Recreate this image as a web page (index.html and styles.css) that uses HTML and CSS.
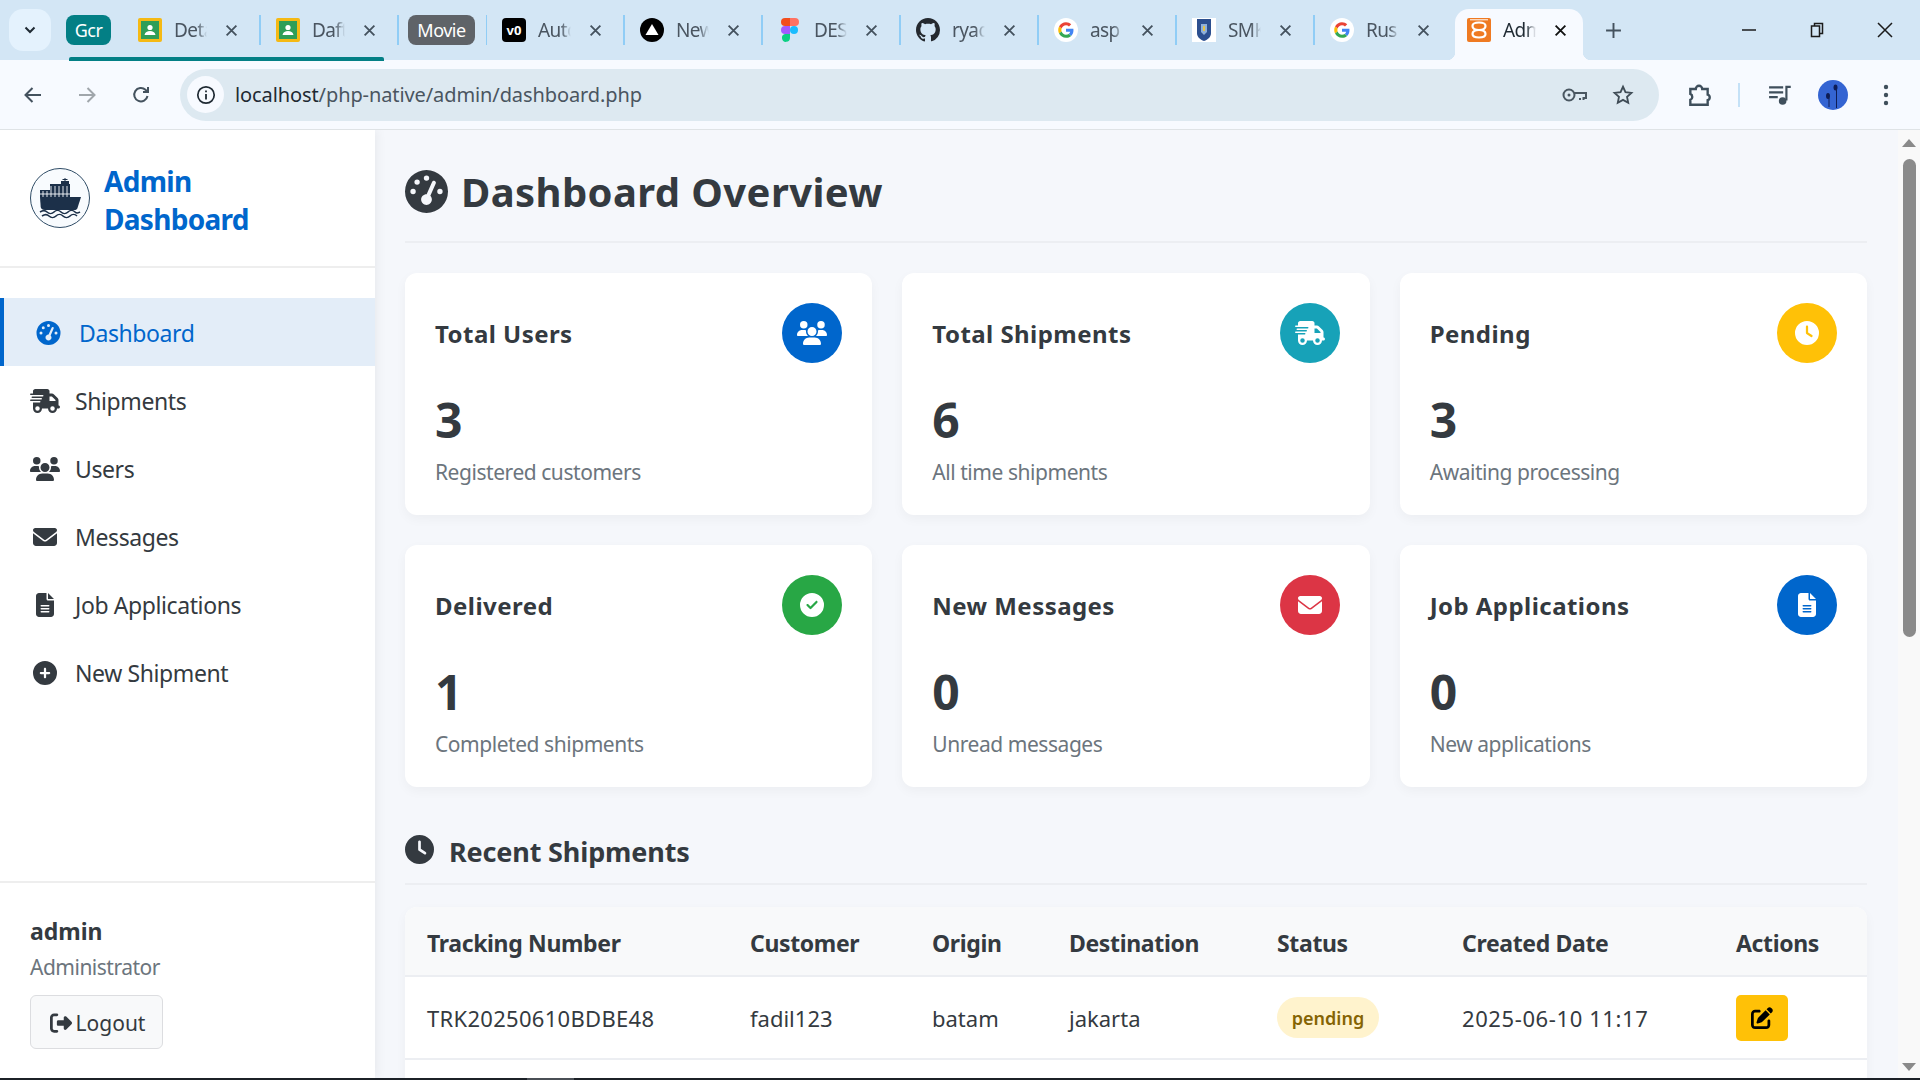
FILE: index.html
```html
<!DOCTYPE html>
<html lang="en">
<head>
  <meta charset="UTF-8">
  <title>Admin Dashboard</title>
  <link rel="stylesheet" href="styles.css">
</head>
<body>
  <svg class="defs" aria-hidden="true">
    <symbol id="i-gauge" viewBox="0 0 512 512"><path d="M0 256a256 256 0 1 1 512 0A256 256 0 1 1 0 256zM288 96a32 32 0 1 0 -64 0 32 32 0 1 0 64 0zM256 416c35.3 0 64-28.7 64-64c0-17.4-6.9-33.1-18.1-44.6L366 161.7c5.3-12.1-.2-26.3-12.3-31.6s-26.3 .2-31.6 12.3L257.9 288c-.6 0-1.3 0-1.9 0c-35.3 0-64 28.7-64 64s28.7 64 64 64zM176 144a32 32 0 1 0 -64 0 32 32 0 1 0 64 0zM96 288a32 32 0 1 0 0-64 32 32 0 1 0 0 64zm352-32a32 32 0 1 0 -64 0 32 32 0 1 0 64 0z"/></symbol>
    <symbol id="i-truck" viewBox="0 0 640 512"><path d="M112 0C85.5 0 64 21.5 64 48V96H16c-8.8 0-16 7.2-16 16s7.2 16 16 16H64 272c8.8 0 16 7.2 16 16s-7.2 16-16 16H64 48c-8.8 0-16 7.2-16 16s7.2 16 16 16H64 240c8.8 0 16 7.2 16 16s-7.2 16-16 16H64 16c-8.8 0-16 7.2-16 16s7.2 16 16 16H64 208c8.8 0 16 7.2 16 16s-7.2 16-16 16H64V416c0 53 43 96 96 96s96-43 96-96H384c0 53 43 96 96 96s96-43 96-96h32c17.7 0 32-14.3 32-32s-14.3-32-32-32V288 256 237.3c0-17-6.7-33.3-18.7-45.3L512 114.7c-12-12-28.3-18.7-45.3-18.7H416V48c0-26.5-21.5-48-48-48H112zM544 237.3V256H416V160h50.7L544 237.3zM160 368a48 48 0 1 1 0 96 48 48 0 1 1 0-96zm272 48a48 48 0 1 1 96 0 48 48 0 1 1 -96 0z"/></symbol>
    <symbol id="i-users" viewBox="0 0 640 512"><path d="M144 0a80 80 0 1 1 0 160A80 80 0 1 1 144 0zM512 0a80 80 0 1 1 0 160A80 80 0 1 1 512 0zM0 298.7C0 239.8 47.8 192 106.7 192h42.7c15.9 0 31 3.5 44.6 9.7c-1.3 7.2-1.9 14.7-1.9 22.3c0 38.2 16.8 72.5 43.3 96c-.2 0-.4 0-.7 0H21.3C9.6 320 0 310.4 0 298.7zM405.3 320c-.2 0-.4 0-.7 0c26.6-23.5 43.3-57.8 43.3-96c0-7.6-.7-15-1.9-22.3c13.6-6.3 28.7-9.7 44.6-9.7h42.7C592.2 192 640 239.8 640 298.7c0 11.8-9.6 21.3-21.3 21.3H405.3zM224 224a96 96 0 1 1 192 0 96 96 0 1 1 -192 0zM128 485.3C128 411.7 187.7 352 261.3 352H378.7C452.3 352 512 411.7 512 485.3c0 14.7-11.9 26.7-26.7 26.7H154.7c-14.7 0-26.7-11.9-26.7-26.7z"/></symbol>
    <symbol id="i-envelope" viewBox="0 0 512 512"><path d="M48 64C21.5 64 0 85.5 0 112c0 15.1 7.1 29.3 19.2 38.4L236.8 313.6c11.4 8.5 27 8.5 38.4 0L492.8 150.4c12.1-9.1 19.2-23.3 19.2-38.4c0-26.5-21.5-48-48-48H48zM0 176V384c0 35.3 28.7 64 64 64H448c35.3 0 64-28.7 64-64V176L294.4 339.2c-22.8 17.1-54 17.1-76.8 0L0 176z"/></symbol>
    <symbol id="i-file" viewBox="0 0 384 512"><path d="M64 0C28.7 0 0 28.7 0 64V448c0 35.3 28.7 64 64 64H320c35.3 0 64-28.7 64-64V160H256c-17.7 0-32-14.3-32-32V0H64zM256 0V128H384L256 0zM112 256H272c8.8 0 16 7.2 16 16s-7.2 16-16 16H112c-8.8 0-16-7.2-16-16s7.2-16 16-16zm0 64H272c8.8 0 16 7.2 16 16s-7.2 16-16 16H112c-8.8 0-16-7.2-16-16s7.2-16 16-16zm0 64H272c8.8 0 16 7.2 16 16s-7.2 16-16 16H112c-8.8 0-16-7.2-16-16s7.2-16 16-16z"/></symbol>
    <symbol id="i-plus" viewBox="0 0 512 512"><path d="M256 512A256 256 0 1 0 256 0a256 256 0 1 0 0 512zM232 344V280H168c-13.3 0-24-10.7-24-24s10.7-24 24-24h64V168c0-13.3 10.7-24 24-24s24 10.7 24 24v64h64c13.3 0 24 10.7 24 24s-10.7 24-24 24H280v64c0 13.3-10.7 24-24 24s-24-10.7-24-24z"/></symbol>
    <symbol id="i-clock" viewBox="0 0 512 512"><path d="M256 0a256 256 0 1 1 0 512A256 256 0 1 1 256 0zM232 120V256c0 8 4 15.5 10.7 20l96 64c11 7.4 25.9 4.4 33.3-6.7s4.4-25.9-6.7-33.3L280 243.2V120c0-13.3-10.7-24-24-24s-24 10.7-24 24z"/></symbol>
    <symbol id="i-check" viewBox="0 0 512 512"><path d="M256 512A256 256 0 1 0 256 0a256 256 0 1 0 0 512zM369 209L241 337c-9.4 9.4-24.6 9.4-33.9 0l-64-64c-9.4-9.4-9.4-24.6 0-33.9s24.6-9.4 33.9 0l47 47L335 175c9.4-9.4 24.6-9.4 33.9 0s9.4 24.6 0 33.9z"/></symbol>
    <symbol id="i-logout" viewBox="0 0 512 512"><path d="M377.9 105.9L500.7 228.7c7.2 7.2 11.3 17.1 11.3 27.3s-4.1 20.1-11.3 27.3L377.9 406.1c-6.4 6.4-15 9.9-24 9.9c-18.7 0-33.9-15.2-33.9-33.9l0-62.1-128 0c-17.7 0-32-14.3-32-32l0-64c0-17.7 14.3-32 32-32l128 0 0-62.1c0-18.7 15.2-33.9 33.9-33.9c9 0 17.6 3.6 24 9.9zM160 96L96 96c-17.7 0-32 14.3-32 32l0 256c0 17.7 14.3 32 32 32l64 0c17.7 0 32 14.3 32 32s-14.3 32-32 32l-64 0c-53 0-96-43-96-96L0 128C0 75 43 32 96 32l64 0c17.7 0 32 14.3 32 32s-14.3 32-32 32z"/></symbol>
    <symbol id="i-edit" viewBox="0 0 512 512"><path d="M471.6 21.7c-21.9-21.9-57.3-21.9-79.2 0L362.3 51.7l97.9 97.9 30.1-30.1c21.9-21.9 21.9-57.3 0-79.2L471.6 21.7zm-299.2 220c-6.1 6.1-10.8 13.6-13.5 21.9l-29.6 88.8c-2.9 8.6-.6 18.1 5.8 24.6s15.9 8.7 24.6 5.8l88.8-29.6c8.2-2.7 15.7-7.4 21.9-13.5L437.7 172.3 339.7 74.3 172.4 241.7zM96 64C43 64 0 107 0 160V416c0 53 43 96 96 96H352c53 0 96-43 96-96V320c0-17.7-14.3-32-32-32s-32 14.3-32 32v96c0 17.7-14.3 32-32 32H96c-17.7 0-32-14.3-32-32V160c0-17.7 14.3-32 32-32h96c17.7 0 32-14.3 32-32s-14.3-32-32-32H96z"/></symbol>
    <symbol id="i-close" viewBox="0 0 12 12"><path d="M1.500 1.500l9 9m0-9l-9 9" fill="none" stroke="currentColor" stroke-width="1.700"/></symbol>
    <symbol id="i-classroom" viewBox="0 0 24 24"><rect width="24" height="24" rx="2" fill="#f5b914"/><rect x="3" y="3" width="18" height="18" fill="#2f9e58"/><circle cx="12" cy="9.500" r="2.600" fill="#fff"/><path d="M6.500 17c.6-3 2.800-4 5.500-4s4.900 1 5.500 4z" fill="#fff"/></symbol>
    <symbol id="i-google" viewBox="0 0 24 24"><circle cx="12" cy="12" r="12" fill="#fff"/><g transform="translate(4.200 4.200) scale(.325)"><path fill="#EA4335" d="M24 9.500c3.540 0 6.710 1.220 9.210 3.600l6.850-6.850C35.900 2.380 30.470 0 24 0 14.620 0 6.510 5.380 2.560 13.220l7.980 6.190C12.430 13.720 17.740 9.500 24 9.500z"/><path fill="#4285F4" d="M46.980 24.550c0-1.570-.15-3.090-.38-4.550H24v9.020h12.940c-.58 2.960-2.260 5.480-4.780 7.180l7.730 6c4.510-4.180 7.090-10.360 7.090-17.650z"/><path fill="#FBBC05" d="M10.530 28.590c-.48-1.450-.76-2.990-.76-4.590s.27-3.140.76-4.590l-7.980-6.190C.92 16.460 0 20.120 0 24c0 3.880.92 7.540 2.560 10.780l7.970-6.190z"/><path fill="#34A853" d="M24 48c6.480 0 11.930-2.130 15.890-5.810l-7.730-6c-2.150 1.450-4.920 2.300-8.160 2.300-6.260 0-11.570-4.220-13.470-9.910l-7.980 6.190C6.510 42.620 14.620 48 24 48z"/></g></symbol>
  </svg>

  <header class="tabstrip">
    <div class="tab-search"><svg class="chevron" viewBox="0 0 12 8"><path d="M1.500 1.500L6 6l4.500-4.500" fill="none" stroke="#1f2a33" stroke-width="2"/></svg></div>
    <div class="group-chip chip-teal">Gcr</div>
    <div class="tab">
      <svg class="favicon"><use href="#i-classroom"/></svg>
      <span class="tab-title">Deta</span>
      <svg class="tab-close"><use href="#i-close"/></svg>
    </div>
    <div class="tab">
      <svg class="favicon"><use href="#i-classroom"/></svg>
      <span class="tab-title">Daft</span>
      <svg class="tab-close"><use href="#i-close"/></svg>
    </div>
    <div class="group-chip chip-gray">Movie</div>
    <div class="tab tab-lead">
      <span class="favicon fav-v0">v0</span>
      <span class="tab-title">Auto</span>
      <svg class="tab-close"><use href="#i-close"/></svg>
    </div>
    <div class="tab">
      <svg class="favicon" viewBox="0 0 24 24"><circle cx="12" cy="12" r="12" fill="#000"/><path d="M12 6l6.500 11h-13z" fill="#fff"/></svg>
      <span class="tab-title">New</span>
      <svg class="tab-close"><use href="#i-close"/></svg>
    </div>
    <div class="tab">
      <svg class="favicon" viewBox="0 0 24 24"><path d="M7 0h5v8H7a4 4 0 0 1 0-8z" fill="#f24e1e"/><path d="M12 0h5a4 4 0 0 1 0 8h-5z" fill="#ff7262"/><path d="M7 8h5v8H7a4 4 0 0 1 0-8z" fill="#a259ff"/><circle cx="16" cy="12" r="4" fill="#1abcfe"/><path d="M7 16h5v4a4 4 0 1 1-5-4z" fill="#0acf83"/></svg>
      <span class="tab-title">DES</span>
      <svg class="tab-close"><use href="#i-close"/></svg>
    </div>
    <div class="tab">
      <svg class="favicon" viewBox="0 0 16 16"><path fill="#24292f" d="M8 0C3.580 0 0 3.580 0 8c0 3.540 2.290 6.530 5.470 7.590.4.070.55-.17.55-.41 0-.19-.01-.82-.01-1.490-2.010.37-2.530-.49-2.690-.94-.09-.23-.48-.94-.82-1.130-.28-.15-.68-.52-.01-.53.63-.01 1.080.58 1.230.82.72 1.210 1.870.87 2.330.66.07-.52.28-.87.51-1.070-1.780-.2-3.640-.89-3.640-3.950 0-.87.31-1.590.82-2.150-.08-.2-.36-1.020.08-2.120 0 0 .67-.21 2.200.82.64-.18 1.320-.27 2-.27.68 0 1.360.09 2 .27 1.530-1.040 2.200-.82 2.200-.82.44 1.100.16 1.920.08 2.120.51.56.82 1.270.82 2.150 0 3.070-1.870 3.750-3.650 3.950.29.25.54.73.54 1.480 0 1.070-.01 1.930-.01 2.200 0 .21.15.46.55.38A8.013 8.013 0 0 0 16 8c0-4.420-3.580-8-8-8z"/></svg>
      <span class="tab-title">ryad</span>
      <svg class="tab-close"><use href="#i-close"/></svg>
    </div>
    <div class="tab">
      <svg class="favicon"><use href="#i-google"/></svg>
      <span class="tab-title">asp</span>
      <svg class="tab-close"><use href="#i-close"/></svg>
    </div>
    <div class="tab">
      <svg class="favicon" viewBox="0 0 24 24"><rect width="24" height="24" fill="#fff"/><path d="M5 1h14v14c0 4-3 6.500-7 8-4-1.500-7-4-7-8z" fill="#2c4f8f"/><path d="M9 6h6v8l-3 3-3-3z" fill="#8fb0d9"/><path d="M11 8h2v5h-2z" fill="#e4c34a"/></svg>
      <span class="tab-title">SMK</span>
      <svg class="tab-close"><use href="#i-close"/></svg>
    </div>
    <div class="tab tab-last">
      <svg class="favicon"><use href="#i-google"/></svg>
      <span class="tab-title">Rus</span>
      <svg class="tab-close"><use href="#i-close"/></svg>
    </div>
    <div class="tab tab-active">
      <svg class="favicon" viewBox="0 0 24 24"><rect width="24" height="24" rx="2" fill="#ef7a22"/><path d="M12 12C9 12 5.500 11 5.500 8S8 4.500 12 4.500 18.500 5 18.500 8 15 12 12 12 5.500 13 5.500 16 8 19.500 12 19.500 18.500 19 18.500 16 15 12 12 12z" fill="none" stroke="#fff" stroke-width="2.200"/><path d="M3 1.800h18" stroke="#fff" stroke-width="1"/></svg>
      <span class="tab-title">Adm</span>
      <svg class="tab-close"><use href="#i-close"/></svg>
    </div>
    <svg class="new-tab" viewBox="0 0 16 16"><path d="M8 1v14M1 8h14" stroke="#44525e" stroke-width="1.800"/></svg>
    <div class="window-btns">
      <svg viewBox="0 0 16 16"><path d="M1 8h14" stroke="#1b1b1b" stroke-width="1.500"/></svg>
      <svg viewBox="0 0 16 16"><path d="M5.500 3.500V1.500h8v10h-2.500M2.500 4h8v10.500h-8z" fill="none" stroke="#1b1b1b" stroke-width="1.500"/></svg>
      <svg viewBox="0 0 16 16"><path d="M1 1l14 14M15 1L1 15" stroke="#1b1b1b" stroke-width="1.500"/></svg>
    </div>
  </header>
  <div class="group-line"></div>

  <nav class="toolbar">
    <svg class="tool-icon" viewBox="0 0 20 20"><path d="M18 10H3M9.500 3L2.500 10l7 7" fill="none" stroke="#44525e" stroke-width="2"/></svg>
    <svg class="tool-icon" viewBox="0 0 20 20"><path d="M2 10h15M10.500 3l7 7-7 7" fill="none" stroke="#a0a6ab" stroke-width="2"/></svg>
    <svg class="tool-icon" viewBox="0 0 20 20"><path d="M16.500 11a6.700 6.700 0 1 1-2-6.200L17 7M17 2v5h-5" fill="none" stroke="#44525e" stroke-width="2"/></svg>
    <div class="omnibox">
      <span class="site-info"><svg viewBox="0 0 20 20"><circle cx="10" cy="10" r="8.200" fill="none" stroke="#1f2a33" stroke-width="1.700"/><path d="M10 9v5.500M10 5.500v1.700" stroke="#1f2a33" stroke-width="1.800"/></svg></span>
      <span class="url"><b>localhost</b>/php-native/admin/dashboard.php</span>
      <svg class="omni-icon" viewBox="0 0 28 20"><circle cx="8" cy="10" r="5.500" fill="none" stroke="#4a5761" stroke-width="2"/><circle cx="8" cy="10" r="1.500" fill="#4a5761"/><path d="M13 8h12v5h-2.500v2M19 13v2" fill="none" stroke="#4a5761" stroke-width="2"/></svg>
      <svg class="omni-icon" viewBox="0 0 24 24"><path d="M12 3l2.700 6 6.500.7-4.800 4.400 1.300 6.400L12 17.300l-5.700 3.200 1.300-6.400-4.800-4.400 6.500-.7z" fill="none" stroke="#3f4c56" stroke-width="2"/></svg>
    </div>
    <svg class="tool-icon ext" viewBox="0 0 24 24"><path d="M4 6.500h5a3 3 0 0 1 6 0h5v5.200a2.600 2.600 0 0 1 0 5V21H4v-4.500a3 3 0 0 0 0-5.500z" fill="none" stroke="#3f4f5c" stroke-width="2.200"/></svg>
    <span class="tool-sep"></span>
    <svg class="tool-icon media" viewBox="0 0 24 24"><path d="M1 5h13M1 9.500h13M1 14h8M21 4.500h-4V17" fill="none" stroke="#3f4f5c" stroke-width="2"/><circle cx="13.500" cy="17.500" r="3.500" fill="#3f4f5c"/></svg>
    <svg class="avatar" viewBox="0 0 30 30"><circle cx="15" cy="15" r="15" fill="#3464d2"/><ellipse cx="17.500" cy="7.500" rx="2" ry="3" fill="#0e1d55"/><path d="M18.500 10v18" stroke="#0e1d55" stroke-width="1"/><ellipse cx="10" cy="16" rx="2" ry="3" fill="#0e1d55"/><path d="M11 18v9" stroke="#0e1d55" stroke-width="1"/></svg>
    <svg class="tool-icon dots" viewBox="0 0 6 24"><circle cx="3" cy="4" r="2.200" fill="#3f4f5c"/><circle cx="3" cy="12" r="2.200" fill="#3f4f5c"/><circle cx="3" cy="20" r="2.200" fill="#3f4f5c"/></svg>
  </nav>

  <div class="viewport">
    <aside class="sidebar">
      <div class="brand">
        <svg class="logo" viewBox="0 0 60 60">
          <circle cx="30" cy="30" r="29.500" fill="#f8fbfe" stroke="#2f4c66" stroke-width="1"/>
          <path d="M10 29h41l-3.500 11c-.5 1.500-1.500 2-3 2H15c-2.500 0-4-1-4.300-3z" fill="#1c3049"/>
          <path d="M10 22h30v7H10z" fill="#1c3049"/>
          <path d="M20 16h20v7H20z" fill="#1c3049"/>
          <path d="M31 13h8v4h-8zM34.500 10h1v3h-1zM32.500 11h5v1h-5z" fill="#1c3049"/>
          <path d="M13 23v6M17 23v6M21 18v11M25 18v11M29 18v11M33 18v11M37 18v11M10 26h30" stroke="#f8fbfe" stroke-width=".9"/>
          <path d="M10 44c3-2 5-2 7 0s5 2 7 0 5-2 7 0 5 2 7 0 5-2 7 0 3 1 5 0M12 48c3-2 5-2 7 0s5 2 7 0 5-2 7 0 5 2 7 0 5-2 7 0" fill="none" stroke="#1c3049" stroke-width="1.600"/>
        </svg>
        <h2 class="brand-title">Admin Dashboard</h2>
      </div>
      <ul class="side-nav">
        <li class="side-item active"><svg class="side-icon"><use href="#i-gauge"/></svg>Dashboard</li>
        <li class="side-item"><svg class="side-icon"><use href="#i-truck"/></svg>Shipments</li>
        <li class="side-item"><svg class="side-icon"><use href="#i-users"/></svg>Users</li>
        <li class="side-item"><svg class="side-icon"><use href="#i-envelope"/></svg>Messages</li>
        <li class="side-item"><svg class="side-icon"><use href="#i-file"/></svg>Job Applications</li>
        <li class="side-item"><svg class="side-icon"><use href="#i-plus"/></svg>New Shipment</li>
      </ul>
      <div class="side-user">
        <div class="user-name">admin</div>
        <div class="user-role">Administrator</div>
        <button class="logout"><svg><use href="#i-logout"/></svg>Logout</button>
      </div>
    </aside>

    <main class="content">
      <h1 class="page-title"><svg><use href="#i-gauge"/></svg>Dashboard Overview</h1>

      <section class="stats">
        <div class="stat-card">
          <div class="stat-head"><h3>Total Users</h3><span class="stat-icon bg-blue"><svg><use href="#i-users"/></svg></span></div>
          <div class="stat-num">3</div>
          <div class="stat-note">Registered customers</div>
        </div>
        <div class="stat-card">
          <div class="stat-head"><h3>Total Shipments</h3><span class="stat-icon bg-cyan"><svg><use href="#i-truck"/></svg></span></div>
          <div class="stat-num">6</div>
          <div class="stat-note">All time shipments</div>
        </div>
        <div class="stat-card">
          <div class="stat-head"><h3>Pending</h3><span class="stat-icon bg-yellow"><svg><use href="#i-clock"/></svg></span></div>
          <div class="stat-num">3</div>
          <div class="stat-note">Awaiting processing</div>
        </div>
        <div class="stat-card">
          <div class="stat-head"><h3>Delivered</h3><span class="stat-icon bg-green"><svg><use href="#i-check"/></svg></span></div>
          <div class="stat-num">1</div>
          <div class="stat-note">Completed shipments</div>
        </div>
        <div class="stat-card">
          <div class="stat-head"><h3>New Messages</h3><span class="stat-icon bg-red"><svg><use href="#i-envelope"/></svg></span></div>
          <div class="stat-num">0</div>
          <div class="stat-note">Unread messages</div>
        </div>
        <div class="stat-card">
          <div class="stat-head"><h3>Job Applications</h3><span class="stat-icon bg-blue"><svg><use href="#i-file"/></svg></span></div>
          <div class="stat-num">0</div>
          <div class="stat-note">New applications</div>
        </div>
      </section>

      <h2 class="section-title"><svg><use href="#i-clock"/></svg>Recent Shipments</h2>

      <div class="table-card">
        <table class="ship-table">
          <thead>
            <tr>
              <th class="col-track">Tracking Number</th>
              <th class="col-cust">Customer</th>
              <th class="col-origin">Origin</th>
              <th class="col-dest">Destination</th>
              <th class="col-status">Status</th>
              <th class="col-date">Created Date</th>
              <th>Actions</th>
            </tr>
          </thead>
          <tbody>
            <tr>
              <td class="cell-track">TRK20250610BDBE48</td>
              <td>fadil123</td>
              <td>batam</td>
              <td>jakarta</td>
              <td><span class="badge-pending">pending</span></td>
              <td class="cell-date">2025-06-10 11:17</td>
              <td><span class="btn-edit"><svg><use href="#i-edit"/></svg></span></td>
            </tr>
          </tbody>
        </table>
        <div class="table-rest"></div>
      </div>
    </main>

    <div class="scrollbar">
      <span class="arrow-up"></span>
      <span class="thumb"></span>
      <span class="arrow-down"></span>
    </div>
  </div>
  <div class="taskbar"><span></span></div>
</body>
</html>
```

FILE: styles.css
```css
* { box-sizing: border-box; }
html, body { margin: 0; height: 100%; overflow: hidden; }
body { width: 1920px; height: 1080px; font-family: "Noto Sans", "Open Sans", sans-serif; color: #343a40; background: #f5f7fb; display: flex; flex-direction: column; }
.defs { display: none; }
svg { fill: currentColor; flex: none; display: block; }

/* browser chrome */
.tabstrip { height: 60px; background: #d3e6f5; display: flex; align-items: center; padding-left: 9px; flex: none; position: relative; }
.tab-search { width: 42px; height: 42px; border-radius: 14px; background: #e4f2fd; display: flex; align-items: center; justify-content: center; margin-right: 15px; }
.chevron { width: 12px; height: 8px; }
.group-chip { height: 30px; border-radius: 8px; color: #fff; font-size: 18px; display: flex; align-items: center; justify-content: center; letter-spacing: -.5px; }
.chip-teal { width: 45px; background: #037f85; margin-right: 12px; }
.chip-gray { width: 67px; background: #5f6368; margin: 0 11px 0 9px; }
.tab { width: 138px; height: 30px; padding-left: 15px; display: flex; align-items: center; border-right: 2px solid #90cdf6; color: #4a5560; }
.tab-lead { box-shadow: -1px 0 0 #90cdf6; margin-left: 1px; }
.tab-last { border-right: 0; width: 140px; }
.tab .favicon { width: 24px; height: 24px; margin-right: 12px; }
.fav-v0 { display: flex; align-items: center; justify-content: center; background: #000; color: #fff; border-radius: 4px; font-size: 13px; font-weight: 700; flex: none; }
.tab-title { width: 33px; overflow: hidden; white-space: nowrap; font-size: 19px; letter-spacing: -.6px; -webkit-mask-image: linear-gradient(90deg, #000 70%, transparent); mask-image: linear-gradient(90deg, #000 70%, transparent); }
.tab-close { width: 13px; height: 13px; margin-left: 18px; color: #44525e; }
.tab-active { position: relative; width: 128px; height: 51px; margin-top: 9px; padding: 0 0 9px 12px; background: #f7faff; border: 0; border-radius: 14px 14px 0 0; color: #1f2a33; }
.tab-active::before, .tab-active::after { content: ""; position: absolute; bottom: 0; width: 8px; height: 8px; }
.tab-active::before { left: -8px; background: radial-gradient(circle at 0 0, transparent 8px, #f7faff 8.500px); }
.tab-active::after { right: -8px; background: radial-gradient(circle at 100% 0, transparent 8px, #f7faff 8.500px); }
.tab-active .tab-close { color: #111; }
.new-tab { width: 17px; height: 17px; margin-left: 22px; }
.window-btns { margin-left: auto; display: flex; align-items: center; gap: 52px; padding-right: 27px; }
.window-btns svg { width: 16px; height: 16px; }
.group-line { height: 4px; width: 315px; margin: -3px 0 -1px 69px; background: #037f85; border-radius: 2px 2px 0 0; position: relative; flex: none; }
.toolbar { height: 70px; background: #f7faff; border-bottom: 1px solid #dfe3e6; display: flex; align-items: center; padding-left: 23px; flex: none; }
.tool-icon { width: 20px; height: 20px; margin-right: 34px; }
.omnibox { width: 1479px; height: 52px; margin-left: -5px; border-radius: 26px; background: #dde9f1; display: flex; align-items: center; padding: 0 22px 0 7px; }
.site-info { width: 37px; height: 37px; border-radius: 50%; background: #f7faff; display: flex; align-items: center; justify-content: center; margin-right: 11px; }
.site-info svg { width: 20px; height: 20px; }
.url { font-size: 20px; color: #4a5560; flex: 1; letter-spacing: -.1px; }
.url b { font-weight: 400; color: #1f2a33; }
.omni-icon { width: 28px; height: 22px; margin-left: 20px; }
.ext { width: 26px; height: 26px; margin: 0 0 0 27px; }
.tool-sep { width: 2px; height: 24px; background: #c4e1f7; margin: 0 28px 0 26px; }
.media { width: 26px; height: 26px; margin: 0 24px 0 0; }
.avatar { width: 30px; height: 30px; }
.dots { width: 6px; height: 24px; margin: 0 0 0 35px; }

/* page */
.viewport { flex: 1; min-height: 0; display: flex; overflow: hidden; }
.sidebar { width: 375px; flex: none; background: #fff; display: flex; flex-direction: column; box-shadow: 2px 0 10px rgba(0,0,0,.06); position: relative; }
.brand { height: 138px; padding: 0 30px; border-bottom: 2px solid #eee; display: flex; align-items: center; gap: 14px; }
.logo { width: 60px; height: 60px; }
.brand-title { margin: 4px 0 0; width: 180px; font-size: 28px; line-height: 38px; font-weight: 700; letter-spacing: -.7px; color: #0066cc; }
.side-nav { list-style: none; margin: 30px 0 0; padding: 0; flex: 1; }
.side-item { height: 68px; padding: 2px 0 0 30px; display: flex; align-items: center; font-size: 23px; letter-spacing: -.4px; color: #343a40; gap: 15px; }
.side-item.active { background: #e3edf8; color: #0066cc; border-left: 4px solid #0066cc; padding-left: 32px; gap: 18px; }
.side-icon { width: 30px; height: 24px; }
.side-item.active .side-icon { width: 25px; }
.side-user { border-top: 2px solid #eee; padding: 30px 30px 29px; }
.user-name { font-size: 23px; font-weight: 700; line-height: 36px; }
.user-role { font-size: 21px; letter-spacing: -.5px; color: #6c757d; line-height: 34px; padding-top: 1px; box-sizing: content-box; }
.logout { margin-top: 11px; width: 133px; height: 54px; border: 1px solid #dcdde0; border-radius: 6px; background: #f8f9fa; color: #343a40; font: 21px "Noto Sans", sans-serif; display: flex; align-items: center; justify-content: center; gap: 4px; padding: 2px 0 0 2px; }
.logout svg { width: 22px; height: 22px; }

.content { flex: 1; min-width: 0; padding: 0 31px 0 30px; overflow: hidden; }
.page-title { margin: 0 0 30px; height: 113px; padding-top: 12px; border-bottom: 2px solid #eceef2; font-size: 40px; font-weight: 700; letter-spacing: .4px; color: #343a40; display: flex; align-items: center; gap: 13px; }
.page-title svg { width: 43px; height: 43px; }
.stats { display: grid; grid-template-columns: repeat(3, 1fr); gap: 30px; }
.stat-card { height: 242px; background: #fff; border-radius: 12px; padding: 30px; box-shadow: 0 4px 12px rgba(0,0,0,.04); }
.stat-head { display: flex; justify-content: space-between; align-items: center; height: 60px; }
.stat-head h3 { margin: 0; font-size: 24px; font-weight: 700; letter-spacing: .45px; color: #343a40; }
.stat-icon { width: 60px; height: 60px; border-radius: 50%; color: #fff; display: flex; align-items: center; justify-content: center; }
.stat-icon svg { width: 30px; height: 24px; }
.bg-blue { background: #0066cc; }
.bg-cyan { background: #17a2b8; }
.bg-yellow { background: #ffc107; }
.bg-green { background: #28a745; }
.bg-red { background: #dc3545; }
.stat-num { margin-top: 28px; font-size: 48px; line-height: 58px; font-weight: 700; color: #343a40; }
.stat-note { font-size: 21px; letter-spacing: -.45px; line-height: 30px; margin-top: 8px; color: #6c757d; }
.section-title { margin: 30px 0 22px; height: 68px; padding-top: 16px; border-bottom: 2px solid #eceef2; font-size: 27px; font-weight: 700; letter-spacing: -.15px; color: #343a40; display: flex; align-items: flex-start; gap: 15px; }
.section-title svg { width: 29px; height: 29px; margin-top: 2px; }
.table-card { background: #fff; border-radius: 12px; overflow: hidden; box-shadow: 0 4px 12px rgba(0,0,0,.04); }
.ship-table { width: 100%; border-collapse: collapse; font-size: 22px; table-layout: fixed; }
.ship-table th { height: 69px; padding: 4px 22px 0; background: #f8f9fa; text-align: left; font-size: 23px; font-weight: 700; letter-spacing: -.35px; border-bottom: 2px solid #eceef2; white-space: nowrap; }
.ship-table td { height: 83px; padding: 0 22px; border-bottom: 2px solid #eceef2; white-space: nowrap; }
.col-track { width: 323px; }
.col-cust { width: 182px; }
.col-origin { width: 137px; }
.col-dest { width: 208px; }
.col-status { width: 185px; }
.col-date { width: 274px; }
.cell-track { letter-spacing: .3px; }
.cell-date { letter-spacing: .6px; }
.badge-pending { display: inline-block; width: 102px; height: 41px; line-height: 43px; text-align: center; border-radius: 21px; background: #fff3cd; color: #856404; font-size: 18px; font-weight: 600; }
.btn-edit { width: 52px; height: 46px; background: #ffc107; border-radius: 5px; display: flex; align-items: center; justify-content: center; color: #000; }
.btn-edit svg { width: 22px; height: 22px; }
.table-rest { height: 60px; }

.scrollbar { width: 22px; flex: none; background: #f9f9f9; display: flex; flex-direction: column; align-items: center; }
.arrow-up, .arrow-down { width: 0; height: 0; border-left: 7px solid transparent; border-right: 7px solid transparent; }
.arrow-up { border-bottom: 8px solid #8a8a8a; margin-top: 9px; }
.thumb { width: 13px; height: 478px; margin-top: 12px; background: #8a8a8a; border-radius: 7px; }
.arrow-down { border-top: 8px solid #8a8a8a; margin-top: auto; margin-bottom: 7px; }
.taskbar { height: 2px; background: #1c2127; flex: none; }
.taskbar span { display: block; width: 47px; height: 2px; margin-left: 527px; background: #4a4f55; }
```
